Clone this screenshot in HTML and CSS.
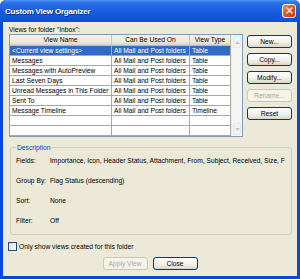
FILE: index.html
```html
<!DOCTYPE html>
<html lang="en">
<head>
    <meta charset="UTF-8">
    <title>Custom View Organizer</title>
    <link rel="stylesheet" href="styles.css">
</head>
<body>
    <div class="window">
        <div class="titlebar">
            <span class="title">Custom View Organizer</span>
            <span class="close">
                <svg width="7" height="7" viewBox="0 0 7 7">
                    <path d="M1 1 L6 6 M6 1 L1 6" stroke="#fff" stroke-width="1.4" stroke-linecap="round"/>
                </svg>
            </span>
        </div>

        <div class="client">
            <div class="caption">Views for folder "Inbox":</div>

            <div class="top">
                <div class="list">
                    <div class="grid">
                        <div class="row header">
                            <div class="cell">View Name</div>
                            <div class="cell">Can Be Used On</div>
                            <div class="cell">View Type</div>
                        </div>
                        <div class="row selected">
                            <div class="cell">&lt;Current view settings&gt;</div>
                            <div class="cell">All Mail and Post folders</div>
                            <div class="cell">Table</div>
                        </div>
                        <div class="row">
                            <div class="cell">Messages</div>
                            <div class="cell">All Mail and Post folders</div>
                            <div class="cell">Table</div>
                        </div>
                        <div class="row">
                            <div class="cell">Messages with AutoPreview</div>
                            <div class="cell">All Mail and Post folders</div>
                            <div class="cell">Table</div>
                        </div>
                        <div class="row">
                            <div class="cell">Last Seven Days</div>
                            <div class="cell">All Mail and Post folders</div>
                            <div class="cell">Table</div>
                        </div>
                        <div class="row">
                            <div class="cell">Unread Messages in This Folder</div>
                            <div class="cell">All Mail and Post folders</div>
                            <div class="cell">Table</div>
                        </div>
                        <div class="row">
                            <div class="cell">Sent To</div>
                            <div class="cell">All Mail and Post folders</div>
                            <div class="cell">Table</div>
                        </div>
                        <div class="row">
                            <div class="cell">Message Timeline</div>
                            <div class="cell">All Mail and Post folders</div>
                            <div class="cell">Timeline</div>
                        </div>
                        <div class="row">
                            <div class="cell"></div>
                            <div class="cell"></div>
                            <div class="cell"></div>
                        </div>
                        <div class="row">
                            <div class="cell"></div>
                            <div class="cell"></div>
                            <div class="cell"></div>
                        </div>
                        <div class="row last">
                            <div class="cell"></div>
                            <div class="cell"></div>
                            <div class="cell"></div>
                        </div>
                    </div>
                    <div class="scrollbar">
                        <div class="arrow">
                            <svg width="5" height="3" viewBox="0 0 5 3"><path d="M0 3 L2.5 0 L5 3 Z" fill="#c3c8d3"/></svg>
                        </div>
                        <div class="track"></div>
                        <div class="arrow">
                            <svg width="5" height="3" viewBox="0 0 5 3"><path d="M0 0 L2.5 3 L5 0 Z" fill="#c3c8d3"/></svg>
                        </div>
                    </div>
                </div>

                <div class="side-buttons">
                    <button class="btn">New...</button>
                    <button class="btn">Copy...</button>
                    <button class="btn">Modify...</button>
                    <button class="btn" disabled>Rename...</button>
                    <button class="btn">Reset</button>
                </div>
            </div>

            <fieldset class="description">
                <legend>Description</legend>
                <div class="desc-row">
                    <span class="desc-label">Fields:</span>
                    <span class="desc-value">Importance, Icon, Header Status, Attachment, From, Subject, Received, Size, F</span>
                </div>
                <div class="desc-row">
                    <span class="desc-label">Group By:</span>
                    <span class="desc-value">Flag Status (descending)</span>
                </div>
                <div class="desc-row">
                    <span class="desc-label">Sort:</span>
                    <span class="desc-value">None</span>
                </div>
                <div class="desc-row">
                    <span class="desc-label">Filter:</span>
                    <span class="desc-value">Off</span>
                </div>
            </fieldset>

            <label class="check">
                <span class="box"></span>
                Only show views created for this folder
            </label>

            <div class="bottom-buttons">
                <button class="btn" disabled>Apply View</button>
                <button class="btn">Close</button>
            </div>
        </div>
    </div>
</body>
</html>
```

FILE: styles.css
```css
body {
    margin: 0;
    width: 300px;
    height: 279px;
    overflow: hidden;
    font-family: 'Liberation Sans', Arial, sans-serif;
    font-size: 6.7px;
    color: #000000;
}

/* Ventana XP */
.window {
    display: flex;
    flex-direction: column;
    width: 300px;
    height: 279px;
    box-sizing: border-box;
    padding: 0 3px 3px 3px;
    background: #0848d8;
    border-radius: 6px 6px 0 0;
}

.titlebar {
    display: flex;
    align-items: center;
    justify-content: space-between;
    height: 22px;
    margin: 0 -3px;
    padding: 0 4px 0 5px;
    border-radius: 6px 6px 0 0;
    background: linear-gradient(#4a97f8 0, #2a6fe6 3px, #1c60e0 10px, #0d55da 18px, #0a4fd0 22px);
}

.title {
    color: #ffffff;
    font-weight: bold;
    font-size: 8px;
    letter-spacing: -0.2px;
    text-shadow: 1px 1px 0 #0a2c8a;
}

.close {
    display: flex;
    align-items: center;
    justify-content: center;
    width: 12px;
    height: 12px;
    margin-top: -1px;
    border: 1px solid #ffffff;
    border-radius: 3px;
    background: linear-gradient(135deg, #ec8a68, #dc4f24 55%, #c63c12);
}

.client {
    flex: 1;
    display: flex;
    flex-direction: column;
    background: #ece9d8;
    padding: 3px 5px 0 6px;
}

.caption {
    line-height: 9px;
    height: 9px;
}

.top {
    display: flex;
    gap: 4px;
}

/* Lista de vistas */
.list {
    display: flex;
    width: 232px;
    height: 101px;
    border: 1px solid #7f9db9;
    background: #ffffff;
    overflow: hidden;
}

.grid {
    flex: 1;
}

.row {
    display: grid;
    grid-template-columns: 102px 78px 41px;
    height: 10px;
}

.cell {
    box-sizing: border-box;
    border-right: 1px solid #a9a8a4;
    border-bottom: 1px solid #a9a8a4;
    padding-left: 2px;
    line-height: 9px;
    white-space: nowrap;
    overflow: hidden;
}

.row.header {
    height: 11px;
}

.row.header .cell {
    text-align: center;
    padding-left: 0;
    line-height: 10px;
    background: linear-gradient(#f4f3ec, #ebeadb 70%, #d6d2c2);
    border-right: 1px solid #c7c5b2;
    border-bottom: 1px solid #c0bca9;
}

.row.selected {
    background: #316ac5;
    color: #ffffff;
}

.scrollbar {
    display: flex;
    flex-direction: column;
    width: 11px;
    background: #f5f5f1;
    border-left: 1px solid #eeede5;
}

.arrow {
    display: flex;
    align-items: center;
    justify-content: center;
    height: 10px;
    margin: 1px;
    border: 1px solid #e6e8ee;
    border-radius: 2px;
    background: #f1f3f7;
}

.track {
    flex: 1;
}

/* Botones */
.side-buttons {
    display: flex;
    flex-direction: column;
    gap: 5px;
    width: 45px;
    padding-top: 1px;
}

.btn {
    box-sizing: border-box;
    width: 45px;
    height: 13px;
    padding: 0;
    font-family: 'Liberation Sans', Arial, sans-serif;
    font-size: 6.7px;
    color: #000000;
    border: 1px solid #003c74;
    border-radius: 3px;
    background: linear-gradient(#ffffff, #f4f3ee 50%, #e3e0d6 85%, #d6d0c5);
}

.btn:disabled {
    color: #aca899;
    border-color: #c9c7ba;
    background: #f5f4ea;
}

/* Descripción */
.description {
    margin: 6px 0 0 1px;
    padding: 2px 5px 0 5px;
    border: 1px solid #d0d0bf;
    border-radius: 3px;
    min-width: 0;
    height: 92px;
    box-sizing: border-box;
}

.description legend {
    color: #0046d5;
    padding: 0 1px;
    line-height: 9px;
}

.desc-row {
    display: flex;
    line-height: 9px;
    height: 9px;
    margin-top: 11px;
    white-space: nowrap;
}

.desc-row:first-of-type {
    margin-top: 2px;
}

.desc-label {
    width: 34px;
    flex-shrink: 0;
}

.check {
    display: flex;
    align-items: center;
    gap: 2px;
    margin: 7px 0 0 -1px;
    line-height: 9px;
}

.box {
    width: 7px;
    height: 7px;
    border: 1px solid #1c5180;
    background: linear-gradient(135deg, #dcdbd5, #ffffff);
}

.bottom-buttons {
    display: flex;
    justify-content: center;
    gap: 5px;
    margin-top: 6px;
    margin-left: -6px;
    margin-right: -5px;
}
```
